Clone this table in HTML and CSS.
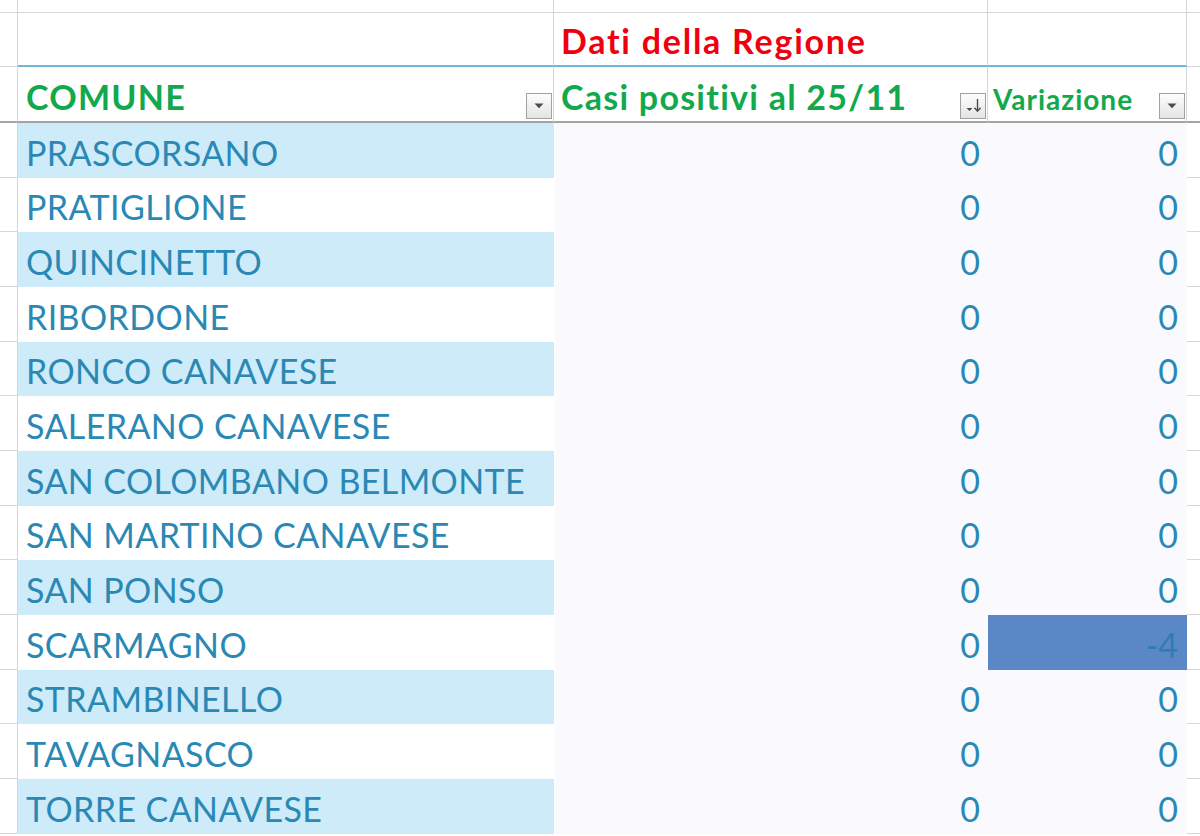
FILE: index.html
```html
<!DOCTYPE html>
<html lang="it">
<head>
<meta charset="utf-8">
<title>Comuni</title>
<link rel="stylesheet" href="styles.css">
</head>
<body>
<div class="sheet">
  <div class="row r-top">
    <div class="c c0"></div><div class="c ca"></div><div class="c cb"></div><div class="c cc"></div><div class="c c4"></div>
  </div>
  <div class="row r-title">
    <div class="c c0"></div><div class="c ca tb"></div><div class="c cb tb"><span class="red">Dati della Regione</span></div><div class="c cc tb"></div><div class="c c4"></div>
  </div>
  <div class="row r-head">
    <div class="c c0"></div>
    <div class="c ca hd"><span class="green">COMUNE</span>
      <span class="fbtn"><svg width="24" height="24" viewBox="0 0 24 24"><path d="M7.5 9.5h9l-4.5 4.8z" fill="#4a4a4a"/></svg></span>
    </div>
    <div class="c cb hd"><span class="green">Casi positivi al 25/11</span>
      <span class="fbtn"><svg width="24" height="24" viewBox="0 0 24 24"><path d="M5.5 14h6l-3 3z" fill="#4a4a4a"/><path d="M16.5 5v12" stroke="#4a4a4a" stroke-width="1.4"/><path d="M13.5 13.8l3 3.4 3-3.4" fill="none" stroke="#4a4a4a" stroke-width="1.4"/></svg></span>
    </div>
    <div class="c cc hd"><span class="green small">Variazione</span>
      <span class="fbtn"><svg width="24" height="24" viewBox="0 0 24 24"><path d="M7.5 9.5h9l-4.5 4.8z" fill="#4a4a4a"/></svg></span>
    </div>
    <div class="c c4 hd4"></div>
  </div>

  <div class="row data">
    <div class="c c0"></div><div class="ca d blue">PRASCORSANO</div><div class="cb n">0</div><div class="cc n">0</div><div class="c c4"></div>
  </div>
  <div class="row data">
    <div class="c c0"></div><div class="ca d">PRATIGLIONE</div><div class="cb n">0</div><div class="cc n">0</div><div class="c c4"></div>
  </div>
  <div class="row data">
    <div class="c c0"></div><div class="ca d blue">QUINCINETTO</div><div class="cb n">0</div><div class="cc n">0</div><div class="c c4"></div>
  </div>
  <div class="row data">
    <div class="c c0"></div><div class="ca d">RIBORDONE</div><div class="cb n">0</div><div class="cc n">0</div><div class="c c4"></div>
  </div>
  <div class="row data">
    <div class="c c0"></div><div class="ca d blue">RONCO CANAVESE</div><div class="cb n">0</div><div class="cc n">0</div><div class="c c4"></div>
  </div>
  <div class="row data">
    <div class="c c0"></div><div class="ca d">SALERANO CANAVESE</div><div class="cb n">0</div><div class="cc n">0</div><div class="c c4"></div>
  </div>
  <div class="row data">
    <div class="c c0"></div><div class="ca d blue">SAN COLOMBANO BELMONTE</div><div class="cb n">0</div><div class="cc n">0</div><div class="c c4"></div>
  </div>
  <div class="row data">
    <div class="c c0"></div><div class="ca d">SAN MARTINO CANAVESE</div><div class="cb n">0</div><div class="cc n">0</div><div class="c c4"></div>
  </div>
  <div class="row data">
    <div class="c c0"></div><div class="ca d blue">SAN PONSO</div><div class="cb n">0</div><div class="cc n">0</div><div class="c c4"></div>
  </div>
  <div class="row data">
    <div class="c c0"></div><div class="ca d">SCARMAGNO</div><div class="cb n">0</div><div class="cc n neg">-4</div><div class="c c4"></div>
  </div>
  <div class="row data">
    <div class="c c0"></div><div class="ca d blue">STRAMBINELLO</div><div class="cb n">0</div><div class="cc n">0</div><div class="c c4"></div>
  </div>
  <div class="row data">
    <div class="c c0"></div><div class="ca d">TAVAGNASCO</div><div class="cb n">0</div><div class="cc n">0</div><div class="c c4"></div>
  </div>
  <div class="row data">
    <div class="c c0"></div><div class="ca d blue">TORRE CANAVESE</div><div class="cb n">0</div><div class="cc n">0</div><div class="c c4"></div>
  </div>
</div>
</body>
</html>
```

FILE: styles.css
```css
html, body {
  margin: 0;
  padding: 0;
  background: #ffffff;
  overflow: hidden;
}

.sheet {
  width: 1200px;
  height: 836px;
  display: flex;
  flex-direction: column;
  font-family: Lato, "Liberation Sans", sans-serif;
  overflow: hidden;
}

.row {
  display: grid;
  grid-template-columns: 18px 536px 434px 199px 13px;
  flex: none;
}

.c {
  box-sizing: border-box;
  border-right: 1px solid #d6d6d6;
  border-bottom: 1px solid #d6d6d6;
}

.c4 {
  border-right: none;
}

.r-top { height: 13px; }

.r-title { height: 54px; }

.tb {
  border-bottom: 2px solid #6fb6d6;
  display: flex;
  align-items: center;
  padding-left: 7px;
  padding-top: 3px;
}

.red {
  color: #f0000f;
  font-weight: 700;
  font-size: 34px;
  letter-spacing: 1.75px;
}

.r-head { height: 56px; }

.r-head .c {
  border-bottom: 2px solid #a4a4a4;
}

.hd {
  position: relative;
  display: flex;
  align-items: center;
  padding-top: 5px;
}

.ca.hd { padding-left: 8px; }
.cb.hd { padding-left: 7px; }
.cc.hd { padding-left: 5px; padding-top: 9px; }

.green {
  color: #12a84c;
  font-weight: 700;
  font-size: 34px;
  letter-spacing: 1.25px;
}

.green.small {
  font-size: 28px;
  letter-spacing: 1px;
}

.fbtn {
  position: absolute;
  right: 1px;
  bottom: 2px;
  width: 24px;
  height: 24px;
  border: 1px solid #a2a2a2;
  background: linear-gradient(#fdfdfd, #e4e4e4);
  display: block;
}

.fbtn svg {
  display: block;
  width: 24px;
  height: 24px;
}

.data { height: 54.67px; }

.d, .n {
  box-sizing: border-box;
  display: flex;
  align-items: center;
  padding-top: 4px;
  font-size: 34px;
  letter-spacing: 0.4px;
  color: #2a88b5;
  white-space: nowrap;
}

.d {
  padding-left: 8px;
  background: #ffffff;
}

.d.blue {
  background: #cdebf8;
}

.n {
  justify-content: flex-end;
  background: #f9f9fe;
  letter-spacing: 0;
}

.cb.n { padding-right: 8px; margin-left: 1px; }
.cc.n { padding-right: 9px; }

.neg {
  background: #5a88c6;
  color: #2f7cb5;
}
```
